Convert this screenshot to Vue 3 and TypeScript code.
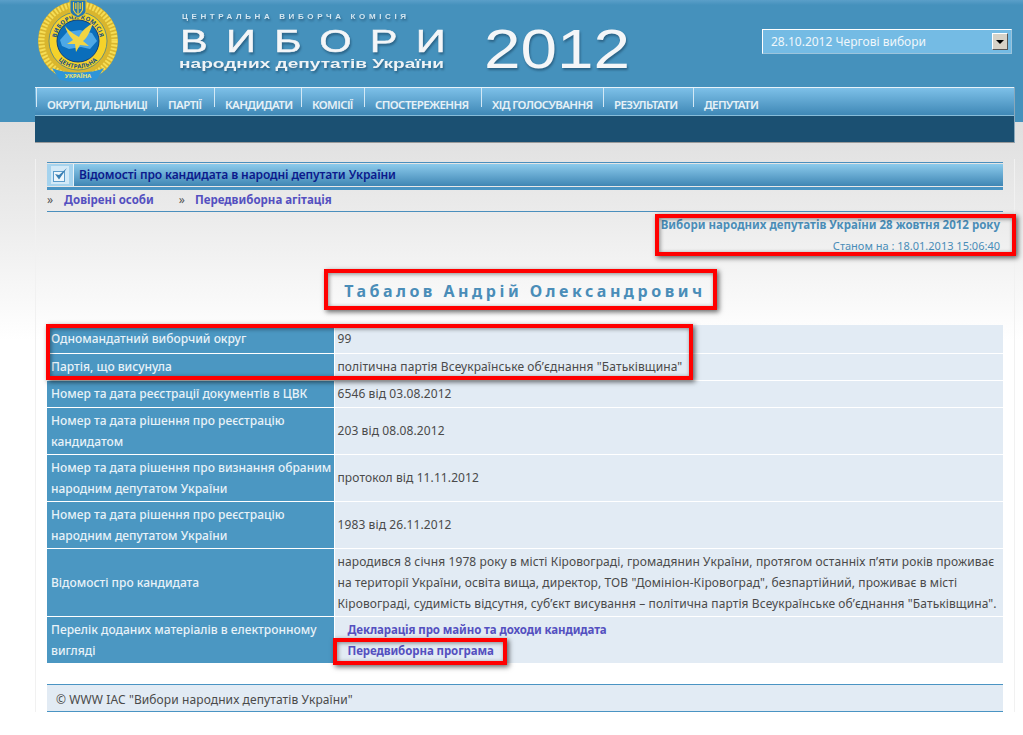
<script setup lang="ts">
const navItems = ['Округи, дільниці', 'Партії', 'Кандидати', 'Комісії', 'Спостереження', 'Хід голосування', 'Результати', 'Депутати']

const rows: { label: string; value: string }[] = [
  { label: 'Одномандатний виборчий округ', value: '99' },
  { label: 'Партія, що висунула', value: 'політична партія Всеукраїнське об’єднання "Батьківщина"' },
  { label: 'Номер та дата реєстрації документів в ЦВК', value: '6546 від 03.08.2012' },
  { label: 'Номер та дата рішення про реєстрацію кандидатом', value: '203 від 08.08.2012' },
  { label: 'Номер та дата рішення про визнання обраним народним депутатом України', value: 'протокол від 11.11.2012' },
  { label: 'Номер та дата рішення про реєстрацію народним депутатом України', value: '1983 від 26.11.2012' },
  {
    label: 'Відомості про кандидата',
    value: 'народився 8 січня 1978 року в місті Кіровограді, громадянин України, протягом останніх п’яти років проживає на території України, освіта вища, директор, ТОВ "Домініон-Кіровоград", безпартійний, проживає в місті Кіровограді, судимість відсутня, суб’єкт висування – політична партія Всеукраїнське об’єднання "Батьківщина".',
  },
]
</script>

<template>
  <div class="page">
    <header class="top">
      <svg class="logo" width="80" height="84" viewBox="0 0 80 84">
        <defs>
          <path id="ring-top" d="M18 41 A22 22 0 0 1 62 41" />
          <path id="ring-bottom" d="M12.5 41 A27.5 27.5 0 0 0 67.5 41" />
        </defs>
        <circle cx="40" cy="41" r="40" fill="#d9b62e" />
        <circle cx="40" cy="41" r="36.5" fill="none" stroke="#f6dd55" stroke-width="6" stroke-dasharray="2 1.6" />
        <circle cx="40" cy="41" r="29" fill="#f5d22a" stroke="#1e6fa8" stroke-width="0.6" />
        <circle cx="40" cy="41" r="21" fill="#0a6ebb" stroke="#0d3f7a" stroke-width="1" />
        <path d="M22 40 L29 32 L42 30 L54 33 L59 41 L52 49 L43 47 L31 49 L24 46 Z" fill="#4da8e6" />
        <path d="M27 26 C33 33 38 35 41 37 C44 30 50 26 55 23 C52 31 50 37 45 41 L51 46 L42 45 L38 52 L37 44 L29 44 L35 40 C31 35 28 31 27 26 Z" fill="#f1d544" />
        <text class="ring-text"><textPath href="#ring-top" startOffset="50%" text-anchor="middle">ВИБОРЧА КОМІСІЯ</textPath></text>
        <text class="ring-text"><textPath href="#ring-bottom" startOffset="50%" text-anchor="middle">ЦЕНТРАЛЬНА</textPath></text>
        <path d="M32 0 H48 V11 C48 14 44 16 40 18 C36 16 32 14 32 11 Z" fill="#2678b2" stroke="#e9c62f" />
        <path d="M35.5 2 V10 C36.5 12 38 14 40 15 C42 14 43.5 12 44.5 10 V2 M40 2 V14 M37.8 3 V9 M42.2 3 V9" fill="none" stroke="#f3d23b" stroke-width="1.1" />
        <path d="M14 68 C26 74 54 74 66 68 L59 79 C52 83 28 83 21 79 Z" fill="#2f95d8" />
        <text x="40" y="78" text-anchor="middle" class="logo-text">УКРАЇНА</text>
      </svg>
      <svg class="wordmark" width="290" height="84" viewBox="0 0 290 84">
        <text x="3" y="19" class="wm-small" textLength="224">ЦЕНТРАЛЬНА ВИБОРЧА КОМІСІЯ</text>
        <text x="1" y="52" class="wm-big" textLength="284" lengthAdjust="spacingAndGlyphs">ВИБОРИ</text>
        <text x="0" y="68" class="wm-sub" textLength="265" lengthAdjust="spacingAndGlyphs">народних депутатів України</text>
      </svg>
      <svg class="year" width="150" height="84" viewBox="0 0 150 84">
        <text x="0" y="68" class="year-text" textLength="146" lengthAdjust="spacingAndGlyphs">2012</text>
      </svg>
      <div class="select">
        <span>28.10.2012 Чергові вибори</span>
        <span class="select-btn"><i></i></span>
      </div>
    </header>

    <nav class="nav">
      <ul class="nav-list">
        <li v-for="item in navItems" :key="item">{{ item }}</li>
      </ul>
      <div class="nav-bottom"></div>
    </nav>

    <main class="content">
      <div class="title-bar">
        <span class="title-icon">
          <svg width="18" height="18" viewBox="0 0 18 18">
            <rect width="18" height="18" fill="#d3e9f7" />
            <rect x="2.5" y="5.500" width="11" height="10" fill="#eef6fb" stroke="#5c9ccb" />
            <path d="M4 8 L8 13.500 L16 2 L8 9 Z" fill="#3a7fb3" />
          </svg>
        </span>
        <h1>Відомості про кандидата в народні депутати України</h1>
      </div>

      <div class="sublinks">
        <span class="raquo">»</span><a>Довірені особи</a>
        <span class="raquo second">»</span><a>Передвиборна агітація</a>
      </div>

      <div class="election">
        <p class="election-name">Вибори народних депутатів України 28 жовтня 2012 року</p>
        <p class="election-date">Станом на : 18.01.2013 15:06:40</p>
      </div>

      <h2 class="person">Табалов Андрій Олександрович</h2>

      <table class="info">
        <tbody>
          <tr v-for="row in rows" :key="row.label">
            <th>{{ row.label }}</th>
            <td>{{ row.value }}</td>
          </tr>
          <tr>
            <th>Перелік доданих матеріалів в електронному вигляді</th>
            <td class="files">
              <a>Декларація про майно та доходи кандидата</a>
              <a>Передвиборна програма</a>
            </td>
          </tr>
        </tbody>
      </table>

      <footer class="foot">© WWW IAC "Вибори народних депутатів України"</footer>

      <!-- red annotation frames drawn over the page -->
      <div class="mark mark-election"></div>
      <div class="mark mark-person"></div>
      <div class="mark mark-rows"></div>
      <div class="mark mark-link"></div>
    </main>
  </div>
</template>

<style scoped>
.page {
  width: 1023px;
  height: 735px;
  overflow: hidden;
  font-family: "Noto Sans", "DejaVu Sans", sans-serif;
  font-size: 12px;
  background:
    linear-gradient(#5b9fc9 0, #4591bc 5px, #4591bc 122px, transparent 122px),
    linear-gradient(#dfdfdf 122px, #ececec 220px, #fff 340px);
}

.top {
  display: flex;
  height: 87px;
  box-sizing: border-box;
  padding-left: 38px;
}

.logo {
  flex: none;
}

.logo-text {
  font-size: 6px;
  font-weight: 700;
  fill: #f4e56a;
}

.ring-text {
  font-size: 6px;
  font-weight: 700;
  letter-spacing: 0.3px;
  fill: #164f86;
}

.wordmark {
  flex: none;
  margin-left: 61px;
  font-family: "Liberation Sans", sans-serif;
  filter: drop-shadow(1px 2px 1px rgba(20, 60, 90, 0.55));
}

.wm-small {
  font-size: 8px;
  font-weight: 700;
  fill: #d3e6f1;
}

.wm-big {
  font-size: 32px;
  letter-spacing: 14px;
  fill: #f4f6f8;
  stroke: #f4f6f8;
  stroke-width: 0.5px;
}

.wm-sub {
  font-size: 13.5px;
  font-weight: 700;
  fill: #eef3f6;
}

.year {
  flex: none;
  margin-left: 15px;
  font-family: "Liberation Sans", sans-serif;
  filter: drop-shadow(1px 2px 1px rgba(20, 60, 90, 0.55));
}

.year-text {
  font-size: 55px;
  fill: #f4f6f8;
}

.select {
  flex: none;
  display: flex;
  align-items: center;
  justify-content: space-between;
  box-sizing: border-box;
  width: 250px;
  height: 25px;
  margin-left: 128px;
  margin-top: 29px;
  padding: 0 3px 0 8px;
  background: #74bbe4;
  border: 1px solid #fff;
  border-right-color: #9cc4dc;
  border-bottom-color: #9cc4dc;
  color: #f0f7fb;
}

.select-btn {
  display: flex;
  align-items: center;
  justify-content: center;
  box-sizing: border-box;
  width: 16px;
  height: 17px;
  background: #d6d2c8;
  border: 1px solid #fff;
  border-right-color: #555;
  border-bottom-color: #555;
}

.select-btn i {
  width: 0;
  height: 0;
  border-style: solid;
  border-width: 4px 4px 0;
  border-color: #000 transparent transparent;
}

.nav {
  width: 980px;
  margin-left: 35px;
  border-right: 1px solid #8aa8bb;
  box-sizing: border-box;
}

.nav-list {
  display: grid;
  grid-template-columns: 121px 57px 87px 63px 117px 122px 90px auto;
  height: 29px;
  margin: 0;
  padding: 0 0 0 1px;
  box-sizing: border-box;
  list-style: none;
  background: linear-gradient(#7dc0e8, #3f88b6);
  border-top: 1px solid #e8f3fa;
  border-bottom: 1px solid #86bcd9;
}

.nav-list li {
  padding: 0 0 0 10px;
  height: 19px;
  line-height: 33px;
  border-left: 1px solid #d3e8f5;
  font-size: 11.5px;
  font-weight: 600;
  letter-spacing: -0.6px;
  text-transform: uppercase;
  white-space: nowrap;
  color: #e6f1f7;
}

.nav-bottom {
  height: 26px;
  background: #1b5072;
  border-bottom: 1px solid #9a9a9a;
}

.content {
  position: relative;
  box-sizing: border-box;
  width: 980px;
  height: 553px;
  margin-left: 35px;
  margin-top: 16px;
  padding: 3px 11px 0;
  border-left: 1px solid #f1f1f1;
  border-right: 1px solid #f1f1f1;
  color: #4a4a4a;
}

.title-bar {
  display: flex;
  align-items: center;
  box-sizing: border-box;
  width: 956px;
  height: 28px;
  padding: 1px 0 1px;
  border-top: 1px solid #4a8fbd;
  border-bottom: 3px solid #4a94c3;
  background: linear-gradient(#8ccbec, #3f86b4) content-box;
}

.title-icon {
  display: flex;
  align-items: center;
  justify-content: center;
  width: 26px;
  height: 100%;
  background: #a5d3ee;
  border-right: 1px solid #e6f2f9;
}

.title-bar h1 {
  margin: 0 0 2px 5px;
  font-size: 12px;
  font-weight: 600;
  letter-spacing: -0.1px;
  color: #0b1a8c;
}

.sublinks {
  box-sizing: border-box;
  width: 956px;
  height: 22px;
  line-height: 20px;
  border-bottom: 1px solid #4a8fbd;
  white-space: nowrap;
}

.raquo {
  margin-right: 11px;
  color: #555;
}

.raquo.second {
  margin-left: 25px;
  margin-right: 10px;
}

.sublinks a,
.files a {
  font-size: 11.5px;
  font-weight: 700;
  color: #5450c0;
}

.election {
  width: 953px;
  text-align: right;
}

.election-name {
  margin: 6px 0 0;
  line-height: 14px;
  font-size: 11.5px;
  font-weight: 700;
  color: #4a8db8;
}

.election-date {
  margin: 7px 0 0;
  line-height: 14px;
  font-size: 11px;
  color: #4a8db8;
}

.person {
  width: 956px;
  margin: 27px 0 0;
  line-height: 22px;
  text-align: center;
  font-size: 16px;
  font-weight: 700;
  letter-spacing: 3.5px;
  color: #4a8db8;
}

.info {
  width: 956px;
  margin-top: 23px;
  border-collapse: collapse;
  table-layout: fixed;
}

.info th,
.info td {
  box-sizing: border-box;
  height: 27px;
  padding: 2px 4px;
  border-bottom: 1px solid #fff;
  line-height: 21px;
  font-size: 12px;
  vertical-align: middle;
}

.info tr:first-child th,
.info tr:first-child td {
  height: 28px;
}

.info th {
  width: 287px;
  padding-right: 0;
  text-align: left;
  font-weight: 500;
  color: #e8f2f8;
  background: #4b97c2;
  border-right: 1px solid #fff;
}

.info td {
  padding-left: 3px;
  letter-spacing: 0.1px;
  background: #e2ebf4;
  color: #4a4a4a;
}

.files a {
  display: block;
  padding-left: 10px;
  letter-spacing: -0.1px;
}

.foot {
  box-sizing: border-box;
  width: 956px;
  height: 28px;
  margin-top: 20px;
  padding-left: 9px;
  line-height: 30px;
  letter-spacing: 0.1px;
  background: #e2ebf4;
  border-top: 1px solid #4a94c3;
  border-bottom: 1px solid #4a94c3;
}

.mark {
  position: absolute;
  box-sizing: border-box;
  border: 4px solid #f00;
  box-shadow: 2px 2px 5px rgba(0, 0, 0, 0.6), inset 1px 1px 4px rgba(0, 0, 0, 0.45);
}

.mark-election {
  left: 619px;
  top: 55px;
  width: 361px;
  height: 42px;
}

.mark-person {
  left: 288px;
  top: 110px;
  width: 393px;
  height: 41px;
}

.mark-rows {
  left: 10px;
  top: 165px;
  width: 647px;
  height: 56px;
}

.mark-link {
  left: 297px;
  top: 479px;
  width: 174px;
  height: 27px;
}
</style>

<style>
html,
body {
  margin: 0;
  background: #fff;
}
</style>
